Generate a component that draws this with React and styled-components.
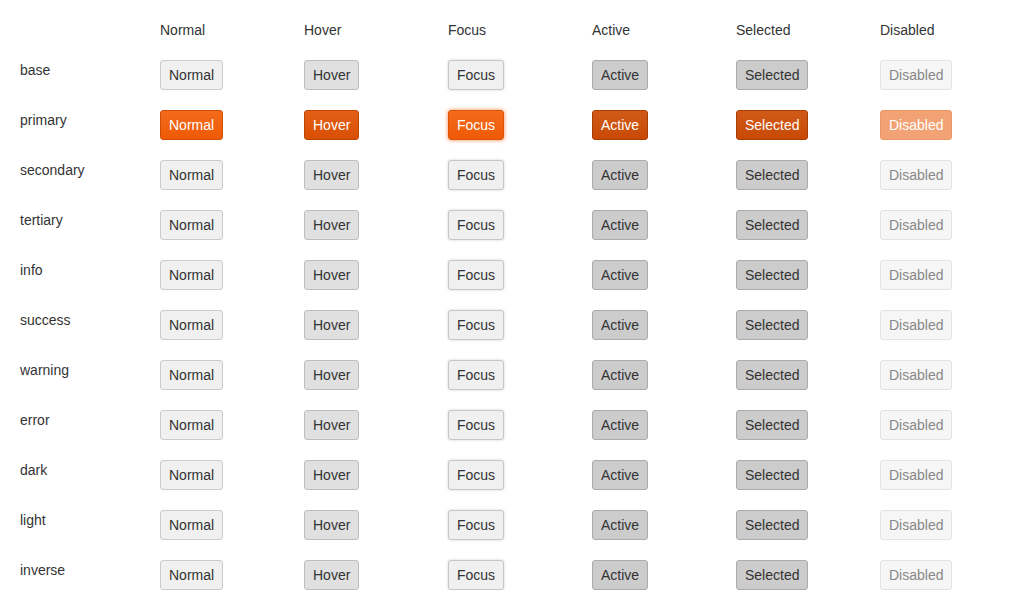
import styled, { createGlobalStyle, css } from 'styled-components'

const GlobalStyle = createGlobalStyle`
    body {
        margin: 0;
        background: #fff;
        font-family: 'Liberation Sans', Arial, sans-serif;
        color: #333;
    }
`

const states = ['Normal', 'Hover', 'Focus', 'Active', 'Selected', 'Disabled']
const variants = ['base', 'primary', 'secondary', 'tertiary', 'info', 'success', 'warning', 'error', 'dark', 'light', 'inverse']

const grayLook = {
    Normal: css`background: #f0f0f0; border-color: #cbcbcb;`,
    Hover: css`background: #e0e0e0; border-color: #bdbdbd;`,
    Focus: css`background: #f0f0f0; border-color: #c6c6c6; box-shadow: 0 0 3px rgba(0, 0, 0, 0.18);`,
    Active: css`background: #cccccc; border-color: #ababab;`,
    Selected: css`background: #cccccc; border-color: #ababab;`,
    Disabled: css`background: #f6f6f6; border-color: #e2e2e2; color: #888;`,
}

const primaryLook = {
    Normal: css`background: linear-gradient(#f36b1c, #ef5a06); border-color: #d04c04; color: #fff;`,
    Hover: css`background: linear-gradient(#e35f17, #d94f04); border-color: #bf4503; color: #fff;`,
    Focus: css`background: linear-gradient(#f36b1c, #ef5a06); border-color: #e05305; color: #fff; box-shadow: 0 0 4px rgba(240, 90, 10, 0.7);`,
    Active: css`background: linear-gradient(#d15a19, #c84a04); border-color: #a83d02; color: #fff;`,
    Selected: css`background: linear-gradient(#d15a19, #c84a04); border-color: #a83d02; color: #fff;`,
    Disabled: css`background: #f2a274; border-color: #eb9866; color: #fff;`,
}

function App() {
    return (
        <Page>
            <GlobalStyle />
            <Grid>
                <HeadCell />
                {states.map(s => <HeadCell key={s}>{s}</HeadCell>)}
                {variants.map(v => (
                    <Row key={v}>
                        <Label>{v}</Label>
                        {states.map(s => (
                            <Cell key={s}>
                                <Button $look={v === 'primary' ? primaryLook[s] : grayLook[s]}>{s}</Button>
                            </Cell>
                        ))}
                    </Row>
                ))}
            </Grid>
        </Page>
    )
}

export default App

const Page = styled.div`
    padding: 22px 20px 0;
`

const Grid = styled.div`
    display: grid;
    grid-template-columns: 140px repeat(6, 144px);
    row-gap: 20px;
    grid-auto-rows: 30px;
    grid-template-rows: 18px;
`

const HeadCell = styled.div`
    font-size: 14px;
    line-height: 16px;
`

const Row = styled.div`
    display: contents;
`

const Label = styled.div`
    font-size: 14px;
    line-height: 16px;
    padding-top: 2px;
`

const Cell = styled.div`
    display: flex;
    align-items: flex-start;
`

const Button = styled.button`
    font-family: 'Liberation Sans', Arial, sans-serif;
    font-size: 14px;
    line-height: 16px;
    height: 30px;
    padding: 6px 8px;
    border: 1px solid;
    border-radius: 3px;
    color: #333;
    cursor: pointer;
    ${p => p.$look}
`
